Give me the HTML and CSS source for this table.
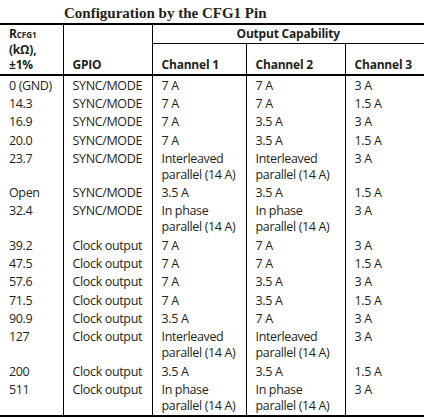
FILE: index.html
```html
<!DOCTYPE html>
<html lang="en">
<head>
  <meta charset="UTF-8">
  <meta name="viewport" content="width=device-width, initial-scale=1.0">
  <title>Configuration by the CFG1 Pin</title>
  <link rel="stylesheet" href="styles.css">
</head>
<body>
  <h1 class="title">Configuration by the CFG1 Pin</h1>
  <table class="cfg">
    <colgroup>
      <col class="c-res">
      <col class="c-gpio">
      <col class="c-ch1">
      <col class="c-ch2">
      <col class="c-ch3">
    </colgroup>
    <thead>
      <tr>
        <th rowspan="2" class="sep">R<sub>CFG1</sub><br>(kΩ),<br>±1%</th>
        <th rowspan="2" class="sep">GPIO</th>
        <th colspan="3" class="group">Output Capability</th>
      </tr>
      <tr class="channels">
        <th class="sep">Channel 1</th>
        <th class="sep">Channel 2</th>
        <th>Channel 3</th>
      </tr>
    </thead>
    <tbody>
      <tr><td>0 (GND)</td><td>SYNC/MODE</td><td>7 A</td><td>7 A</td><td>3 A</td></tr>
      <tr><td>14.3</td><td>SYNC/MODE</td><td>7 A</td><td>7 A</td><td>1.5 A</td></tr>
      <tr><td>16.9</td><td>SYNC/MODE</td><td>7 A</td><td>3.5 A</td><td>3 A</td></tr>
      <tr><td>20.0</td><td>SYNC/MODE</td><td>7 A</td><td>3.5 A</td><td>1.5 A</td></tr>
      <tr><td>23.7</td><td>SYNC/MODE</td><td>Interleaved<br>parallel (14 A)</td><td>Interleaved<br>parallel (14 A)</td><td>3 A</td></tr>
      <tr><td>Open</td><td>SYNC/MODE</td><td>3.5 A</td><td>3.5 A</td><td>1.5 A</td></tr>
      <tr><td>32.4</td><td>SYNC/MODE</td><td>In phase<br>parallel (14 A)</td><td>In phase<br>parallel (14 A)</td><td>3 A</td></tr>
      <tr><td>39.2</td><td>Clock output</td><td>7 A</td><td>7 A</td><td>3 A</td></tr>
      <tr><td>47.5</td><td>Clock output</td><td>7 A</td><td>7 A</td><td>1.5 A</td></tr>
      <tr><td>57.6</td><td>Clock output</td><td>7 A</td><td>3.5 A</td><td>3 A</td></tr>
      <tr><td>71.5</td><td>Clock output</td><td>7 A</td><td>3.5 A</td><td>1.5 A</td></tr>
      <tr><td>90.9</td><td>Clock output</td><td>3.5 A</td><td>7 A</td><td>3 A</td></tr>
      <tr><td>127</td><td>Clock output</td><td>Interleaved<br>parallel (14 A)</td><td>Interleaved<br>parallel (14 A)</td><td>3 A</td></tr>
      <tr><td>200</td><td>Clock output</td><td>3.5 A</td><td>3.5 A</td><td>1.5 A</td></tr>
      <tr><td>511</td><td>Clock output</td><td>In phase<br>parallel (14 A)</td><td>In phase<br>parallel (14 A)</td><td>3 A</td></tr>
    </tbody>
  </table>
</body>
</html>
```

FILE: styles.css
```css
body {
  margin: 0;
  background-color: #fff;
  color: #231f20;
  font-family: 'Open Sans', sans-serif;
}

.title {
  margin: 0;
  padding: 4px 0 0 64px;
  height: 19px;
  font-family: 'Liberation Serif', serif;
  font-size: 15px;
  font-weight: bold;
  line-height: 19px;
}

.cfg {
  width: 424px;
  border-collapse: collapse;
  table-layout: fixed;
  border-top: 2px solid #000;
  border-bottom: 2px solid #000;
  font-size: 12.5px;
  letter-spacing: -0.35px;
}

.c-res { width: 63px; }
.c-gpio { width: 89px; }
.c-ch1 { width: 94px; }
.c-ch2 { width: 99px; }
.c-ch3 { width: 79px; }

.cfg th,
.cfg td {
  padding: 1.25px 9px;
  line-height: 15.85px;
  text-align: left;
  vertical-align: top;
  white-space: nowrap;
}

.cfg th {
  font-weight: bold;
  font-size: 12px;
  letter-spacing: -0.2px;
  line-height: 15.6px;
  vertical-align: bottom;
}

.cfg th.group {
  height: 14px;
  text-align: center;
  vertical-align: middle;
  border-bottom: 1px solid #000;
}

.cfg thead {
  border-bottom: 2px solid #000;
}

.cfg th.sep,
.cfg td:not(:last-child) {
  border-right: 1px solid #000;
}

.cfg sub {
  font-size: 8px;
  line-height: 0;
  vertical-align: baseline;
  letter-spacing: 0;
}
```
